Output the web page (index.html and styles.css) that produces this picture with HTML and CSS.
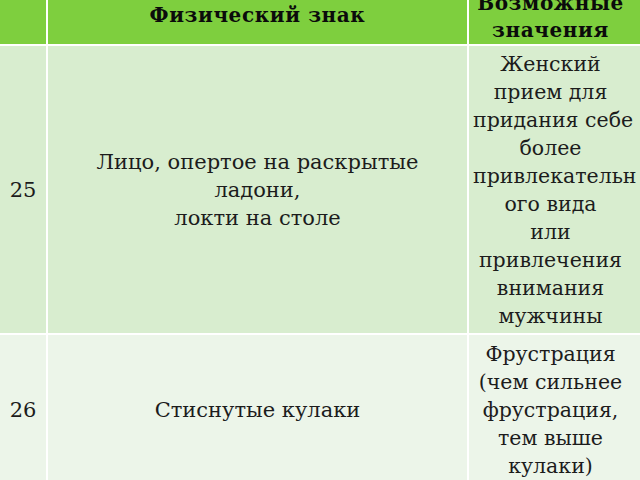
FILE: index.html
```html
<!DOCTYPE html>
<html lang="ru">
<head>
<meta charset="utf-8">
<link rel="stylesheet" href="styles.css">
</head>
<body>
<table class="signs">
  <colgroup>
    <col class="c-num">
    <col class="c-sign">
    <col class="c-mean">
  </colgroup>
  <thead>
    <tr class="head">
      <th class="num"></th>
      <th class="sign">Физический знак</th>
      <th class="mean">Возможные<br>значения</th>
    </tr>
  </thead>
  <tbody>
    <tr class="row odd">
      <td class="num">25</td>
      <td class="sign">Лицо, опертое на раскрытые<br>ладони,<br>локти на столе</td>
      <td class="mean">Женский<br>прием для<br>придания себе<br>более<br>привлекательн<br>ого вида<br>или<br>привлечения<br>внимания<br>мужчины</td>
    </tr>
    <tr class="row even">
      <td class="num">26</td>
      <td class="sign">Стиснутые кулаки</td>
      <td class="mean">Фрустрация<br>(чем сильнее<br>фрустрация,<br>тем выше<br>кулаки)</td>
    </tr>
  </tbody>
</table>
</body>
</html>
```
FILE: styles.css
```css
html, body {
  margin: 0;
  padding: 0;
  width: 640px;
  height: 480px;
  overflow: hidden;
  background: #ffffff;
}

.signs {
  border-collapse: separate;
  border-spacing: 0;
  table-layout: fixed;
  width: 640px;
  margin-top: -17px;
  font-family: "DejaVu Serif", "Liberation Serif", serif;
  color: #1c1c1c;
}

.c-num { width: 48px; }
.c-sign { width: 421px; }
.c-mean { width: 171px; }

.signs th,
.signs td {
  box-sizing: border-box;
  padding: 0;
  text-align: center;
  vertical-align: middle;
  border-right: 2px solid #ffffff;
  border-bottom: 2px solid #ffffff;
  white-space: nowrap;
}

.signs th.mean,
.signs td.mean {
  border-right: 0;
  padding: 0 12px 0 4px;
}

.head th {
  height: 63px;
  background: #7ecf3e;
  font-size: 20px;
  line-height: 27px;
  font-weight: bold;
  letter-spacing: 0.6px;
  color: #0b0b0b;
}

.head th.sign {
  padding-top: 4px;
}

.head th.mean {
  padding-top: 7px;
}

.row td {
  font-size: 21px;
  line-height: 28px;
}

.row td.mean {
  font-size: 20.5px;
}

.odd td {
  height: 289px;
  background: #d8edcf;
}

.even td {
  height: 151px;
  background: #ecf5e9;
}
```
